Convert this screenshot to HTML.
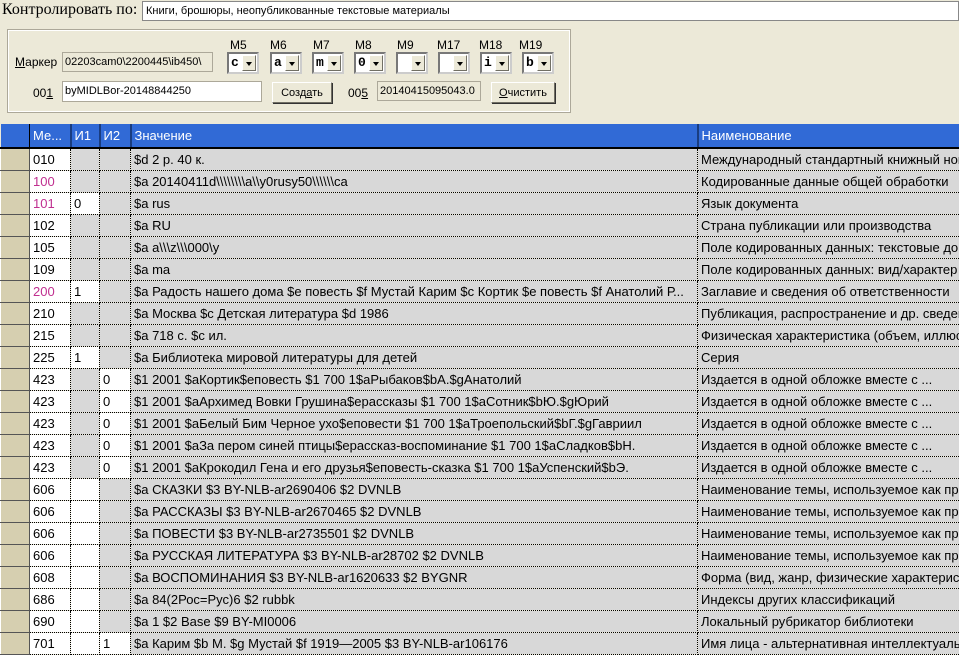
<!DOCTYPE html>
<html><head><meta charset="utf-8"><style>
body{margin:0;width:959px;height:653px;overflow:hidden;background:#ece9d8;font-family:"Liberation Sans",sans-serif;font-size:12px;position:relative}
.a{position:absolute}
.top{left:0;top:0;width:959px;height:24px;background:#ece9d8}
.ctl{left:142px;top:1px;width:817px;height:20px;background:#fff;border:1px solid #888;box-sizing:border-box;font-size:11px;line-height:18px;padding-left:3px}
.panel{left:8px;top:30px;width:562px;height:82px;border:1px solid #fff;outline:1px solid #aca899;box-sizing:border-box}
.inp{background:#ece9d8;border:1px solid #aca899;box-sizing:border-box;font-size:11px;line-height:18px;padding-left:2px}
.btn{background:#ece9d8;border:1px solid;border-color:#fff #716f64 #716f64 #fff;box-sizing:border-box;text-align:center;font-size:11px;line-height:20px;box-shadow:1px 1px 0 #333}
.cb{width:32px;height:22px;background:#fff;border:2px inset #ccc;box-sizing:border-box;font-family:"Liberation Mono",monospace;font-weight:bold;font-size:13px;line-height:18px;padding-left:2px}
.cb i{position:absolute;right:1px;top:1px;width:14px;height:16px;background:#ece9d8;border:1px solid;border-color:#fff #716f64 #716f64 #fff;box-sizing:border-box}
.cb i:after{content:"";position:absolute;left:3px;top:6px;border:3px solid transparent;border-top:4px solid #000}
.lbl{font-size:12px}
table{position:absolute;left:0;top:124px;border-collapse:collapse;table-layout:fixed;width:1000px}
td{height:22px;padding:0 0 0 3px;border-right:1px dotted #000;border-bottom:1px dotted #000;white-space:nowrap;overflow:hidden;font-size:13px;background:#d8d8d8;box-sizing:border-box}
th{height:24px;box-sizing:border-box;background:#316ad6;color:#fff;font-weight:normal;text-align:left;padding-left:3px;border-right:2px solid #1a3d80;border-bottom:2px solid #000;font-size:13px}
td.h{background:#d6cfb0;border:1px solid;border-color:#fff #555 #555 #fff;padding:0}
td.w{background:#fff}
.p{color:#c03090}
</style></head><body>
<div class="a top"></div>
<div class="a" style="left:2px;top:1px;font-family:'Liberation Serif',serif;font-size:16px">Контролировать по:</div>
<div class="a ctl">Книги, брошюры, неопубликованные текстовые материалы</div>
<div class="a panel"></div>
<div class="a lbl" style="left:15px;top:55px"><u>М</u>аркер</div>
<div class="a inp" style="left:62px;top:52px;width:151px;height:20px">02203cam0\2200445\ib450\</div>
<div class="a lbl" style="left:230px;top:38px">M5</div>
<div class="a lbl" style="left:270px;top:38px">M6</div>
<div class="a lbl" style="left:313px;top:38px">M7</div>
<div class="a lbl" style="left:355px;top:38px">M8</div>
<div class="a lbl" style="left:397px;top:38px">M9</div>
<div class="a lbl" style="left:437px;top:38px">M17</div>
<div class="a lbl" style="left:479px;top:38px">M18</div>
<div class="a lbl" style="left:519px;top:38px">M19</div>
<div class="a cb" style="left:227px;top:52px">c<i></i></div>
<div class="a cb" style="left:270px;top:52px">a<i></i></div>
<div class="a cb" style="left:312px;top:52px">m<i></i></div>
<div class="a cb" style="left:354px;top:52px">0<i></i></div>
<div class="a cb" style="left:396px;top:52px"><i></i></div>
<div class="a cb" style="left:438px;top:52px"><i></i></div>
<div class="a cb" style="left:480px;top:52px">i<i></i></div>
<div class="a cb" style="left:522px;top:52px">b<i></i></div>
<div class="a lbl" style="left:33px;top:86px">00<u>1</u></div>
<div class="a inp" style="left:62px;top:81px;width:200px;height:21px;background:#fff">byMIDLBor-20148844250</div>
<div class="a btn" style="left:272px;top:82px;width:60px;height:21px">Созд<u>а</u>ть</div>
<div class="a lbl" style="left:348px;top:86px">00<u>5</u></div>
<div class="a inp" style="left:377px;top:81px;width:104px;height:20px">20140415095043.0</div>
<div class="a btn" style="left:491px;top:82px;width:64px;height:21px"><u>О</u>чистить</div>
<table>
<colgroup><col style="width:29px"><col style="width:41px"><col style="width:29px"><col style="width:31px"><col style="width:567px"><col style="width:303px"></colgroup>
<tr><th style="background:#316ad6;border-right:1px solid #000"></th><th>Ме...</th><th>И1</th><th>И2</th><th>Значение</th><th>Наименование</th></tr>
<tr><td class="h"></td><td class="w">010</td><td></td><td></td><td>$d 2 р. 40 к.</td><td>Международный стандартный книжный номер</td></tr>
<tr><td class="h"></td><td class="w p">100</td><td></td><td></td><td>$a 20140411d\\\\\\\\a\\y0rusy50\\\\\\ca</td><td>Кодированные данные общей обработки</td></tr>
<tr><td class="h"></td><td class="w p">101</td><td class="w">0</td><td></td><td>$a rus</td><td>Язык документа</td></tr>
<tr><td class="h"></td><td class="w">102</td><td></td><td></td><td>$a RU</td><td>Страна публикации или производства</td></tr>
<tr><td class="h"></td><td class="w">105</td><td></td><td></td><td>$a a\\\z\\\000\y</td><td>Поле кодированных данных: текстовые документы</td></tr>
<tr><td class="h"></td><td class="w">109</td><td></td><td></td><td>$a ma</td><td>Поле кодированных данных: вид/характер</td></tr>
<tr><td class="h"></td><td class="w p">200</td><td class="w">1</td><td></td><td>$a Радость нашего дома $e повесть $f Мустай Карим $c Кортик $e повесть $f Анатолий Р...</td><td>Заглавие и сведения об ответственности</td></tr>
<tr><td class="h"></td><td class="w">210</td><td></td><td></td><td>$a Москва $c Детская литература $d 1986</td><td>Публикация, распространение и др. сведения</td></tr>
<tr><td class="h"></td><td class="w">215</td><td></td><td></td><td>$a 718 с. $c ил.</td><td>Физическая характеристика (объем, иллюстрации)</td></tr>
<tr><td class="h"></td><td class="w">225</td><td class="w">1</td><td></td><td>$a Библиотека мировой литературы для детей</td><td>Серия</td></tr>
<tr><td class="h"></td><td class="w">423</td><td></td><td class="w">0</td><td>$1 2001 $aКортик$eповесть $1 700 1$aРыбаков$bА.$gАнатолий</td><td>Издается в одной обложке вместе с ...</td></tr>
<tr><td class="h"></td><td class="w">423</td><td></td><td class="w">0</td><td>$1 2001 $aАрхимед Вовки Грушина$ерассказы $1 700 1$aСотник$bЮ.$gЮрий</td><td>Издается в одной обложке вместе с ...</td></tr>
<tr><td class="h"></td><td class="w">423</td><td></td><td class="w">0</td><td>$1 2001 $aБелый Бим Черное ухо$eповести $1 700 1$aТроепольский$bГ.$gГавриил</td><td>Издается в одной обложке вместе с ...</td></tr>
<tr><td class="h"></td><td class="w">423</td><td></td><td class="w">0</td><td>$1 2001 $aЗа пером синей птицы$ерассказ-воспоминание $1 700 1$aСладков$bН.</td><td>Издается в одной обложке вместе с ...</td></tr>
<tr><td class="h"></td><td class="w">423</td><td></td><td class="w">0</td><td>$1 2001 $aКрокодил Гена и его друзья$eповесть-сказка $1 700 1$aУспенский$bЭ.</td><td>Издается в одной обложке вместе с ...</td></tr>
<tr><td class="h"></td><td class="w">606</td><td class="w"></td><td></td><td>$a СКАЗКИ $3 BY-NLB-ar2690406 $2 DVNLB</td><td>Наименование темы, используемое как предмет</td></tr>
<tr><td class="h"></td><td class="w">606</td><td class="w"></td><td></td><td>$a РАССКАЗЫ $3 BY-NLB-ar2670465 $2 DVNLB</td><td>Наименование темы, используемое как предмет</td></tr>
<tr><td class="h"></td><td class="w">606</td><td class="w"></td><td></td><td>$a ПОВЕСТИ $3 BY-NLB-ar2735501 $2 DVNLB</td><td>Наименование темы, используемое как предмет</td></tr>
<tr><td class="h"></td><td class="w">606</td><td class="w"></td><td></td><td>$a РУССКАЯ ЛИТЕРАТУРА $3 BY-NLB-ar28702 $2 DVNLB</td><td>Наименование темы, используемое как предмет</td></tr>
<tr><td class="h"></td><td class="w">608</td><td class="w"></td><td></td><td>$a ВОСПОМИНАНИЯ $3 BY-NLB-ar1620633 $2 BYGNR</td><td>Форма (вид, жанр, физические характеристики)</td></tr>
<tr><td class="h"></td><td class="w">686</td><td class="w"></td><td></td><td>$a 84(2Рос=Рус)6 $2 rubbk</td><td>Индексы других классификаций</td></tr>
<tr><td class="h"></td><td class="w">690</td><td class="w"></td><td></td><td>$a 1 $2 Base $9 BY-MI0006</td><td>Локальный рубрикатор библиотеки</td></tr>
<tr><td class="h"></td><td class="w">701</td><td class="w"></td><td class="w">1</td><td>$a Карим $b М. $g Мустай $f 1919—2005 $3 BY-NLB-ar106176</td><td>Имя лица - альтернативная интеллектуальная ответственность</td></tr>
</table>
</body></html>
